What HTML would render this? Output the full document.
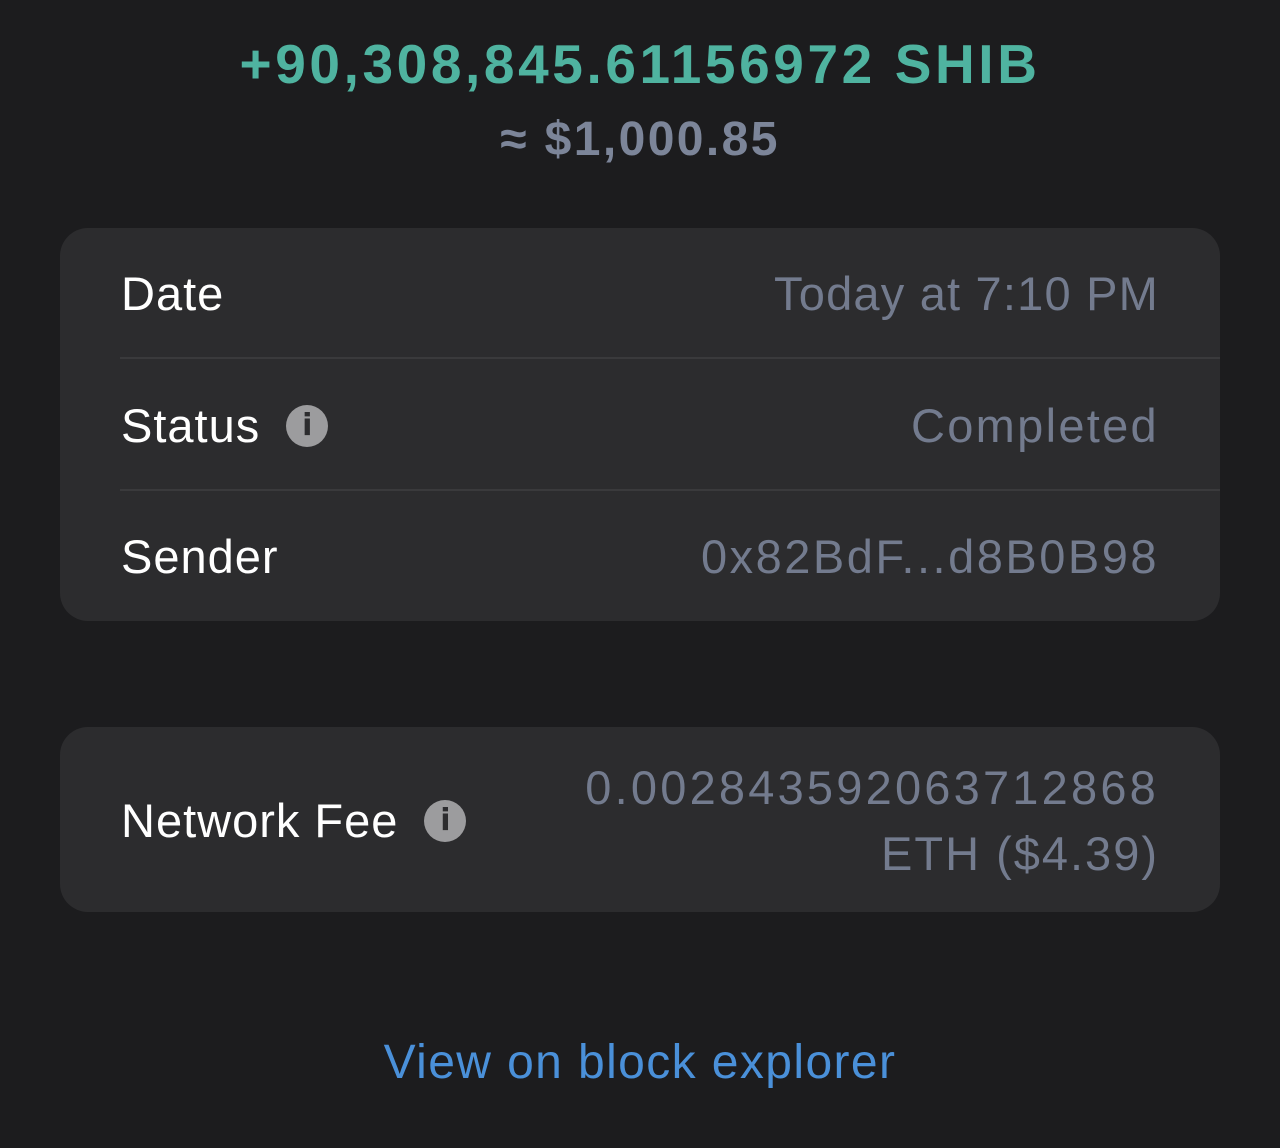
<!DOCTYPE html>
<html><head><meta charset="utf-8"><style>
html,body{margin:0;padding:0;background:#1c1c1e;width:1280px;height:1148px;overflow:hidden;font-family:"Liberation Sans",sans-serif}
.abs{position:absolute}
.t1{left:0;width:1280px;text-align:center;top:32px;font-size:55px;font-weight:bold;color:#4fb3a0;line-height:64px;letter-spacing:3.6px}
.t2{left:0;width:1280px;text-align:center;top:110px;font-size:48px;font-weight:bold;color:#7c8599;line-height:60px;letter-spacing:2.4px}
.card{left:60px;width:1160px;background:#2c2c2e;border-radius:28px}
.lbl{left:121px;color:#fff;font-size:47px;line-height:56px;letter-spacing:1px}
.val{right:121px;color:#737b8e;font-size:47px;line-height:56px;text-align:right;letter-spacing:1.2px}
.div{left:120px;right:0;width:1100px;height:2px;background:#3a3a3c}
.info{display:inline-block;width:42px;height:42px;border-radius:50%;background:#9c9c9e;color:#2c2c2e;font-weight:bold;font-size:30px;line-height:42px;text-align:center;vertical-align:middle;margin-left:26px;position:relative;top:-4px;font-family:"DejaVu Sans",sans-serif;letter-spacing:0}
.link{left:0;width:1280px;text-align:center;top:1034px;font-size:48px;color:#4a90d9;line-height:58px;letter-spacing:1.4px}
</style></head><body>
<div class="abs t1">+90,308,845.61156972 SHIB</div>
<div class="abs t2">≈ $1,000.85</div>
<div class="abs card" style="top:228px;height:393px"></div>
<div class="abs lbl" style="top:266px">Date</div>
<div class="abs val" style="top:266px">Today at 7:10 PM</div>
<div class="abs div" style="top:357px"></div>
<div class="abs lbl" style="top:398px">Status<span class="info">i</span></div>
<div class="abs val" style="top:398px;letter-spacing:2.3px">Completed</div>
<div class="abs div" style="top:489px"></div>
<div class="abs lbl" style="top:529px">Sender</div>
<div class="abs val" style="top:529px;letter-spacing:2.5px">0x82BdF...d8B0B98</div>
<div class="abs card" style="top:727px;height:185px"></div>
<div class="abs lbl" style="top:793px">Network Fee<span class="info">i</span></div>
<div class="abs val" style="top:760px;letter-spacing:3.2px">0.002843592063712868</div>
<div class="abs val" style="top:826px;letter-spacing:2px">ETH ($4.39)</div>
<div class="abs link">View on block explorer</div>
</body></html>
